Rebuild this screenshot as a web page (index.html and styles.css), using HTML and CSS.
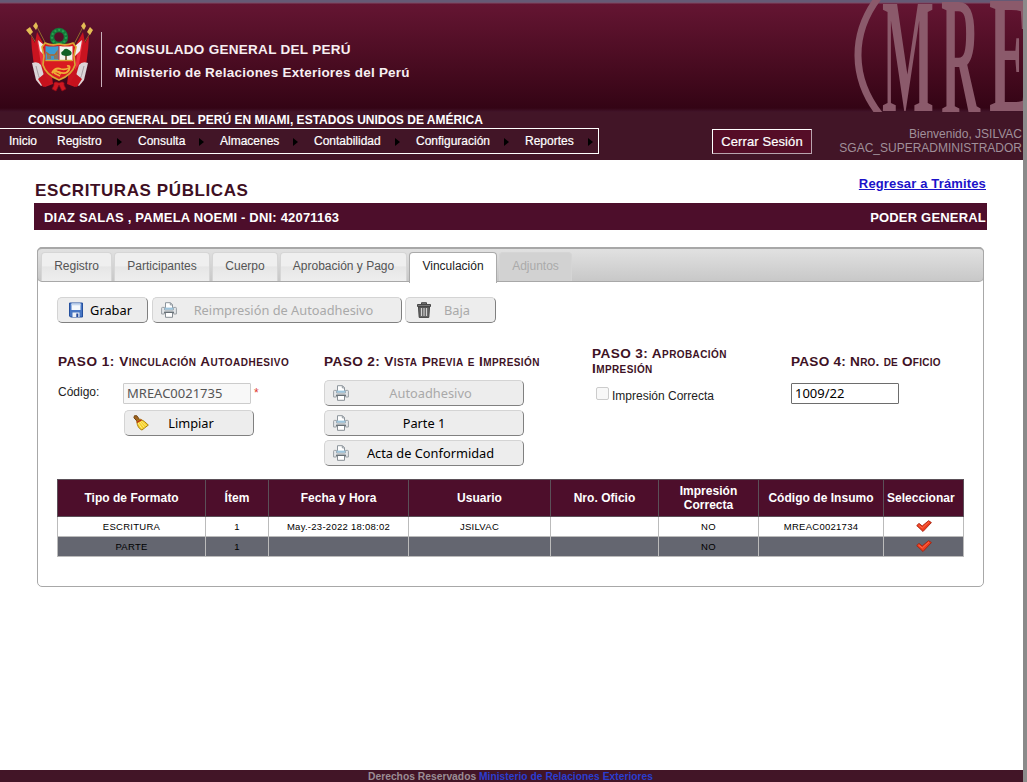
FILE: index.html
```
<!DOCTYPE html>
<html lang="es">
<head>
<meta charset="utf-8">
<title>Escrituras Públicas</title>
<link rel="stylesheet" href="styles.css">
</head>
<body>
<svg class="defs" width="0" height="0" aria-hidden="true">
  <symbol id="printer" viewBox="0 0 16 16">
    <path d="M4.500 6V.7h5l2 2V6" fill="#fff" stroke="#8d959c"/>
    <path d="M9.300.8v2.100h2.100" fill="none" stroke="#8d959c"/>
    <path d="M.6 12V6.200q0-.8.8-.8h2.200V8h8.800V5.400h2.200q.8 0 .8.8V12h-2.800V10H3.400v2z" fill="#e4e7ea" stroke="#9a9fa4"/>
    <path d="M3.600 5.600h8.800v2.100H3.600z" fill="#9cc4dc"/>
    <path d="M4.500 10.500h7v4.800h-7z" fill="#fff" stroke="#858c93"/>
    <path d="M3 10.300h10" stroke="#5f686f"/>
  </symbol>
  <symbol id="check" viewBox="0 0 16 12">
    <path d="M.7 5.600 3 3.400 6.200 6 12.600.7 15.400 2.600 7 11.500z" fill="#f03c1e" stroke="#a5220f" stroke-width=".9" stroke-linejoin="round"/>
    <path d="M2.600 5.100 6.300 8 13 1.900" fill="none" stroke="#ff7a58" stroke-width=".8"/>
  </symbol>
</svg>
<div class="page">
  <header class="banner">
    <svg class="emblem" viewBox="0 0 80 80">
      <g stroke="#8d6a2c" stroke-width="1"><path d="M8 14 24 40M16 9 28 32M72 14 56 40M64 9 52 32"/></g>
      <g fill="#e3bd55"><path d="m10 11 3 5-3 3-4-5zM16 6l2 4-2 4-3-4zM70 11l-3 5 3 3 3-5zM64 6l-3 4 3 4 2-4z"/></g>
      <path d="M17 16 29 38 33 68 25 71 18 67Q12 45 11 20l4 7z" fill="#c81420"/>
      <path d="M63 16 51 38 47 68l8 3 7-4q6-22 7-47l-4 7z" fill="#c81420"/>
      <path d="M12 47q6-2 9 2l5 18-5 3-5-6z" fill="#dcd5d8"/>
      <path d="M68 47q-6-2-9 2l-5 18 5 3 5-6z" fill="#dcd5d8"/>
      <path d="M16 50q2 10 6 18M64 50q-2 10-6 18" stroke="#a79da2" fill="none"/>
      <path d="m17 24 5 8 3 22-4-6z" fill="#ee3340"/>
      <path d="m63 24-5 8-3 22 4-6z" fill="#ee3340"/>
      <path d="m18 63 5 8 7-4-6-9zM62 63l-5 8-7-4 6-9z" fill="#c5121d"/>
      <path d="m18 24 7 6v10l-5-5zM62 24l-7 6v10l5-5z" fill="#f3eded"/>
      <circle cx="39" cy="21" r="7" fill="none" stroke="#15793a" stroke-width="4.400"/>
      <circle cx="39" cy="21" r="7" fill="none" stroke="#25a04e" stroke-width="2" stroke-dasharray="2 2"/>
      <path d="M25 27q7 3 14 1 7 2 14-1l3 4-2 9 1 9q-3 10-16 15-13-5-16-15l1-9-2-9z" fill="#d91b20" stroke="#d9a636" stroke-width="1.700"/>
      <path d="M25.500 30q7 1 13 0v15h-13z" fill="#3f9bd0"/>
      <path d="M39.500 30q7 1 13 0v15h-13z" fill="#f3f5ee"/>
      <path d="M25.500 44.500h27" stroke="#d9a636" stroke-width="1.400"/>
      <path d="M28 43v-4l-1-2 3 2h5l2-3v7m-2 0v-3m-5 3v-3" stroke="#a96932" stroke-width="1.400" fill="none"/>
      <path d="M46 37v7" stroke="#69441c" stroke-width="1.500"/>
      <path d="M42 39q-2-3 1-4 2-4 6-1 4 2 2 5-4 2-9 0z" fill="#126126"/>
      <path d="M47 50q4-1 2 4-3 5-10 2-5-1-7 1 3-6 9-4 4 1 8-1M34 57l6 3m-5-6 6 4" fill="none" stroke="#efae37" stroke-width="1.800"/>
      <path d="M39 67c-3-2-6-1-5 2l-2 4 4 2 3-6 3 6 4-2-2-4c1-3-2-4-5-2z" fill="#cf1721" stroke="#8f0c18" stroke-width=".7"/>
    </svg>
    <div class="brand">
      <div class="brand-a">CONSULADO GENERAL DEL PERÚ</div>
      <div class="brand-b">Ministerio de Relaciones Exteriores del Perú</div>
    </div>
    <svg class="mre" viewBox="0 0 171 113">
      <path d="M26-2C-1 34-1 78 28 115" fill="none"/>
      <g class="mre-letters">
        <text transform="translate(30 111) scale(.55 1.63)">M</text>
        <text transform="translate(89 115) scale(.54 1.72)">R</text>
        <text transform="translate(137 111) scale(.62 1.68)">E</text>
      </g>
    </svg>
  </header>

  <div class="bar">
    <div class="bar-left">
      <div class="office">CONSULADO GENERAL DEL PERÚ EN MIAMI, ESTADOS UNIDOS DE AMÉRICA</div>
      <nav class="menu">
        <a class="m1">Inicio</a><a class="m2">Registro<i></i></a><a class="m3">Consulta<i></i></a><a class="m4">Almacenes<i></i></a><a class="m5">Contabilidad<i></i></a><a class="m6">Configuración<i></i></a><a class="m7">Reportes<i></i></a>
      </nav>
    </div>
    <button class="logout">Cerrar Sesión</button>
    <div class="user">Bienvenido, JSILVAC<br>SGAC_SUPERADMINISTRADOR</div>
  </div>

  <main class="content">
    <div class="title-row">
      <h1>ESCRITURAS PÚBLICAS</h1>
      <a class="back" href="#">Regresar a Trámites</a>
    </div>
    <div class="person"><span>DIAZ SALAS , PAMELA NOEMI - DNI: 42071163</span><span>PODER GENERAL</span></div>

    <section class="tabs">
      <div class="tab-bar">
        <div class="tab w1">Registro</div><div class="tab w2">Participantes</div><div class="tab w3">Cuerpo</div><div class="tab w4">Aprobación y Pago</div><div class="tab w5 active">Vinculación</div><div class="tab w6 off">Adjuntos</div>
      </div>
      <div class="panel">
        <div class="tools">
          <button class="btn b-save"><svg viewBox="0 0 16 16"><path d="M1.500 1h13v14h-12l-1-1z" fill="#4776c4" stroke="#25509e"/><path d="M3.500 1.500h9V8h-9z" fill="#f4f8fc"/><path d="M3.500 1.500h9v1.800h-9z" fill="#c5d7ee"/><path d="M4.500 10.500h7V15h-7z" fill="#eef2f7"/><path d="M8.300 11.500h2V15h-2z" fill="#24499b"/></svg><span>Grabar</span></button>
          <button class="btn b-reprint dis"><svg><use href="#printer"/></svg><span>Reimpresión de Autoadhesivo</span></button>
          <button class="btn b-del dis"><svg viewBox="0 0 16 16"><path d="M5.500 2V.7h5V2M1.500 2.500h13v2h-13z" fill="#777" stroke="#484848"/><path d="M2.500 5h11l-.7 10.400H3.200z" fill="#666" stroke="#454545"/><path d="M5.500 6v8M8 6v8M10.500 6v8" stroke="#d2d2d2" stroke-width="1.100"/></svg><span>Baja</span></button>
        </div>

        <div class="steps">
          <div class="step">
            <h2 class="p1">PASO 1: Vinculación Autoadhesivo</h2>
            <div class="code"><label>Código:</label><span class="field off">MREAC0021735</span><em>*</em></div>
            <button class="btn b-clean"><svg viewBox="0 0 17 17"><path d="M1.500.8 4 .7 7 4.800 4.400 6.700 1 3z" fill="#a0641e" stroke="#6c3f0c"/><path d="M4 6.500 8 4.500Q12 6 16.300 10.700L9.500 16Q4.500 14 4 6.500z" fill="#f5ce28" stroke="#a87b08"/><path d="m7 7 5 6M9 6.500l5 5M5.500 8.500l4 6" stroke="#fff08a"/><path d="m4 7.800 5-2.600" stroke="#b52b16" stroke-width="1.400"/></svg><span>Limpiar</span></button>
          </div>
          <div class="step">
            <h2 class="p2">PASO 2: Vista Previa e Impresión</h2>
            <div class="stack">
              <button class="btn b-print dis"><svg><use href="#printer"/></svg><span class="s1">Autoadhesivo</span></button>
              <button class="btn b-print"><svg><use href="#printer"/></svg><span class="s2">Parte 1</span></button>
              <button class="btn b-print"><svg><use href="#printer"/></svg><span>Acta de Conformidad</span></button>
            </div>
          </div>
          <div class="step">
            <h2 class="p3">PASO 3: Aprobación Impresión</h2>
            <div class="chk"><i></i>Impresión Correcta</div>
          </div>
          <div class="step">
            <h2 class="p4">PASO 4: Nro. de Oficio</h2>
            <span class="field num">1009/22</span>
          </div>
        </div>

        <table class="grid">
          <colgroup><col class="c1"><col class="c2"><col class="c3"><col class="c4"><col class="c5"><col class="c6"><col class="c7"><col class="c8"></colgroup>
          <tr class="head"><th>Tipo de Formato</th><th>Ítem</th><th>Fecha y Hora</th><th>Usuario</th><th>Nro. Oficio</th><th>Impresión Correcta</th><th>Código de Insumo</th><th class="sel">Seleccionar</th></tr>
          <tr><td>ESCRITURA</td><td>1</td><td>May.-23-2022 18:08:02</td><td>JSILVAC</td><td></td><td>NO</td><td>MREAC0021734</td><td><svg class="tick"><use href="#check"/></svg></td></tr>
          <tr class="alt"><td>PARTE</td><td>1</td><td></td><td></td><td></td><td>NO</td><td></td><td><svg class="tick"><use href="#check"/></svg></td></tr>
        </table>
      </div>
    </section>
  </main>

  <footer class="foot">Derechos Reservados <span>Ministerio de Relaciones Exteriores</span></footer>
</div>
</body>
</html>
```
FILE: styles.css
```
* { box-sizing: border-box; }
body { margin: 0; background: #8a8a8a; font: 12px/14px "Liberation Sans", Arial, sans-serif; color: #222; overflow: hidden; }
h1, h2 { margin: 0; }
button { margin: 0; padding: 0; font: inherit; }
.defs { position: absolute; }
.page { width: 1023px; height: 782px; background: #fff; display: flex; flex-direction: column; }

.banner { height: 112px; flex: none; display: flex; align-items: flex-start; background: linear-gradient(#655a75 0, #655a75 2px, #7d4a64 3px, #641532 4px, #4b0c22 60px, #340415 108px, #42152a 112px); }
.emblem { width: 80px; height: 80px; margin: 16px 0 0 20px; flex: none; }
.brand { margin: 32px 0 0 1px; height: 55px; border-left: 1px solid #c9b0bb; padding: 10px 0 0 13px; color: #f7eff2; font-weight: bold; font-size: 13.5px; white-space: nowrap; line-height: 16px; }
.brand-a { letter-spacing: .29px; }
.brand-b { margin-top: 7px; letter-spacing: .22px; }
.mre { width: 171px; height: 113px; margin-left: auto; flex: none; overflow: hidden; }
.mre path { stroke: #8b5a6b; stroke-width: 7; }
.mre-letters { font: bold 100px "Liberation Serif", serif; fill: #8b5a6b; }

.bar { height: 48px; flex: none; background: #421527; display: flex; align-items: flex-start; color: #fff; }
.bar-left { width: 600px; }
.office { padding-left: 28px; height: 16px; font-weight: bold; line-height: 16px; white-space: nowrap; letter-spacing: .01px; }
.menu { width: 599px; height: 26px; border: 1px solid #fff; border-left: 0; display: flex; line-height: 24px; }
.menu a { display: flex; align-items: center; justify-content: space-between; padding-right: 16px; white-space: nowrap; flex: none; -webkit-text-stroke: .2px #fff; }
.menu i { width: 0; height: 0; border: 4px solid transparent; border-left: 5px solid #000; border-right: 0; margin-top: 2px; }
.m1 { width: 57px; padding-left: 9px; }
.m2 { width: 81px; }
.m3 { width: 82px; }
.m4 { width: 94px; }
.m5 { width: 102px; }
.m6 { width: 109px; }
.menu .m7 { width: 73px; padding-right: 5px; }
.logout { width: 100px; height: 25px; margin: 17px 0 0 112px; border: 1px solid; border-color: #fff #b9a4ae #b9a4ae #fff; background: #550d27; color: #fff; font-size: 13px; line-height: 22px; letter-spacing: .1px; -webkit-text-stroke: .2px #fff; }
.user { margin: 15px 1px 0 auto; text-align: right; color: #a0909a; line-height: 14px; }

.content { flex: 1; padding-left: 34px; width: 988px; }
.title-row { height: 43px; display: flex; justify-content: space-between; }
.title-row h1 { font-size: 17px; line-height: 20px; margin: 21px 0 0 1px; color: #3e0f23; letter-spacing: .6px; white-space: nowrap; }
.back { margin: 16px 2px 0 0; font-size: 13px; line-height: 15px; font-weight: bold; color: #1b12c9; letter-spacing: .15px; }
.person { width: 953px; height: 27px; background: #4d0e2b; color: #fff; font-weight: bold; font-size: 13px; line-height: 29px; padding: 0 1px 0 10px; display: flex; justify-content: space-between; letter-spacing: .19px; }

.tabs { width: 947px; height: 340px; margin: 17px 0 0 3px; border: 1px solid #a8a8a8; border-radius: 5px; }
.tab-bar { height: 35px; margin: -1px; width: 947px; border: 1px solid #a8a8a8; border-top-width: 2px; border-radius: 5px; background: linear-gradient(#e1e1e1, #c8c8c8); display: flex; align-items: flex-start; padding: 3px 0 0 3px; gap: 2px; }
.tab { height: 29px; border: 1px solid #d6d6d6; border-bottom: 0; border-radius: 4px 4px 0 0; text-align: center; line-height: 27px; color: #555; background: linear-gradient(#efefef 45%, #e6e6e6 50%, #eee); flex: none; white-space: nowrap; }
.w1 { width: 71px; } .w2 { width: 96px; } .w3 { width: 66px; } .w4 { width: 127px; } .w5 { width: 88px; } .w6 { width: 73px; }
.tab.active { height: 31px; background: #fff; border-color: #aaa; color: #222; }
.tab.off { color: #aaa; background: #d2d2d2; border-color: #d5d5d5; }
.panel { padding: 16px 0 0 20px; }

.btn { height: 26px; border: 1px solid; border-color: #d4d4d4 #808080 #808080 #d4d4d4; border-radius: 5px; background: #ededed; display: flex; align-items: center; color: #000; font: 12.8px/24px "Noto Sans", sans-serif; padding: 0; flex: none; }
.btn svg { width: 16px; height: 16px; flex: none; }
.btn span { flex: 1; text-align: center; white-space: nowrap; }
.btn.dis { color: #a9a9a9; }
.tools { display: flex; height: 27px; margin-left: -1px; }
.b-save { width: 91px; padding-left: 10px; padding-right: 9px; }
.b-reprint { width: 250px; margin-left: 4px; padding-left: 8px; padding-right: 11px; }
.b-del { width: 91px; margin-left: 3px; padding-left: 10px; padding-right: 13px; }

.steps { display: grid; grid-template-columns: 266px 268px 199px 180px; height: 155px; padding-top: 20px; }
.step h2 { font-size: 13.6px; line-height: 15px; height: 35px; display: flex; align-items: center; font-variant: small-caps; color: #3e1225; letter-spacing: .4px; font-weight: bold; }
.step .p1 { letter-spacing: .5px; white-space: nowrap; }
.step .p3 { width: 150px; height: 34px; }
.step .p4 { letter-spacing: .24px; }
.code { display: flex; height: 21px; margin-top: 4px; }
.code label { width: 65px; line-height: 19px; }
.code em { color: #e0392e; font-style: normal; margin-left: 3px; line-height: 20px; }
.field { display: block; width: 128px; height: 21px; border: 1px solid #6d6d6d; border-radius: 1px; font: 13px/19px "Noto Sans", sans-serif; padding-left: 3px; background: #fff; color: #000; }
.field.off { border-color: #ccc; background: #f8f8f8; color: #555; }
.field.num { width: 108px; margin-top: 4px; }
.b-clean { width: 130px; margin: 6px 0 0 66px; padding-left: 8px; padding-right: 20px; }
.stack { display: flex; flex-direction: column; gap: 4px; margin-top: 1px; }
.b-print { width: 200px; padding-left: 8px; padding-right: 11px; }
.b-print .s2 { padding-right: 13px; }
.chk { display: flex; align-items: center; margin: 6px 0 0 4px; height: 20px; padding-top: 3px; }
.chk i { width: 13px; height: 13px; border: 1px solid #ccc; border-radius: 2px; background: #f8f8f8; margin: -4px 3px 0 0; }

.grid { width: 906px; margin-left: -1px; border-collapse: collapse; table-layout: fixed; text-align: center; }
.grid th { height: 37px; padding: 0; background: #4d0e2b; color: #fff; border: 1px solid #5b5058; font-size: 12px; line-height: 14px; letter-spacing: .03px; }
.grid .sel { text-align: left; padding-left: 3px; }
.grid td { height: 20px; padding: 0; border: 1px solid #bbb; font-size: 9.5px; line-height: 12px; letter-spacing: .27px; color: #000; }
.grid .alt td { background: #646670; }
.c1 { width: 148px; } .c2 { width: 63px; } .c3 { width: 140px; } .c4 { width: 142px; } .c5 { width: 108px; } .c6 { width: 100px; } .c7 { width: 125px; } .c8 { width: 80px; }
.tick { width: 16px; height: 12px; display: block; margin: -1px auto 0; }

.foot { height: 12px; flex: none; background: #421527; color: #9b8d94; font-size: 10.3px; font-weight: bold; line-height: 13px; text-align: center; padding-right: 2px; overflow: hidden; }
.foot span { color: #2a3ed0; }
```
